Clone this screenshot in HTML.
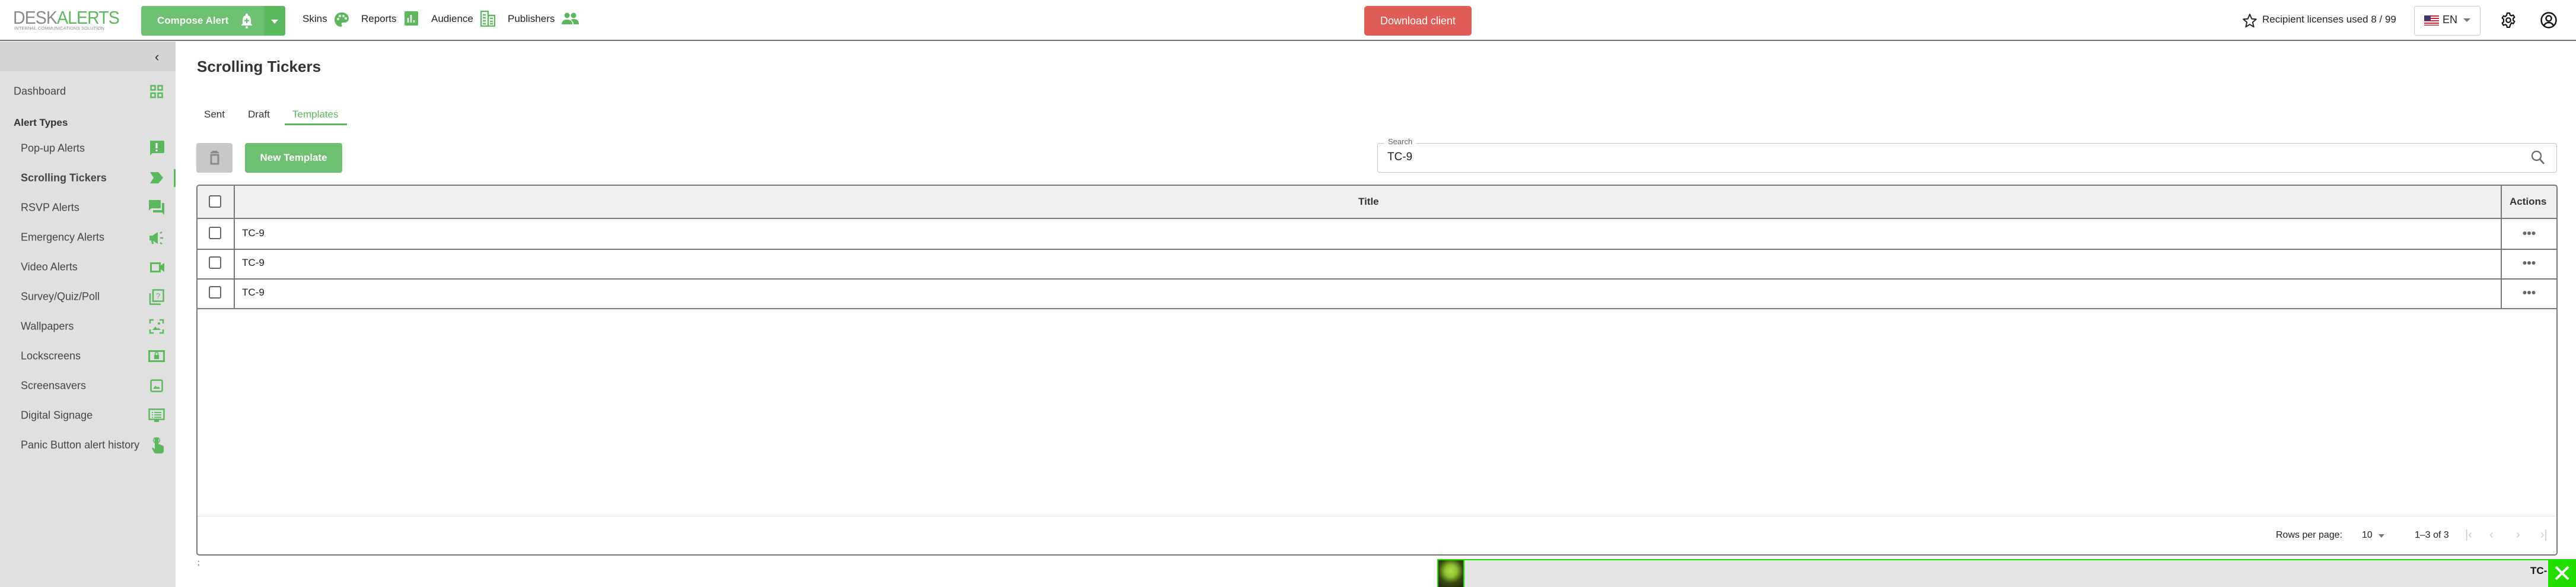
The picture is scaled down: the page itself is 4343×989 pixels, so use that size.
<!DOCTYPE html>
<html><head><meta charset="utf-8"><style>
*{box-sizing:border-box;margin:0;padding:0}
body{width:4343px;height:989px;position:relative;overflow:hidden;background:#fff;font-family:"Liberation Sans",sans-serif;color:#333}
.a{position:absolute}
.hdr{left:0;top:0;width:4343px;height:69px;border-bottom:2px solid #707070;background:#fff}
.nav{font-size:17px;color:#222;top:22px}
.side{left:0;top:70px;width:296px;height:919px;background:#e0e0e0}
.si{left:35px;font-size:18px;color:#444;transform:translateY(-50%)}
.cb{width:21px;height:21px;border:2.5px solid #666;border-radius:3px;background:#fff}
</style></head><body>
<div class="a hdr"></div>
<div class="a" style="left:22px;top:14px;font-size:31px;letter-spacing:-1px;line-height:31px;transform:scaleX(0.92);transform-origin:left"><span style="color:#8a8a8a">DESK</span><span style="color:#5cb85c">ALERTS</span></div>
<div class="a" style="left:24px;top:43px;font-size:7.5px;color:#8a8a8a;letter-spacing:0.1px">INTERNAL COMMUNICATIONS SOLUTION</div>
<div class="a" style="left:238px;top:10px;width:243px;height:50px;background:#6cc070;border-radius:4px;overflow:hidden">
<div class="a" style="left:207px;top:0;width:36px;height:50px;background:#5cb85c"></div>
<div class="a" style="left:27px;top:15px;color:#fff;font-weight:700;font-size:17px">Compose Alert</div>
<svg class="a" style="left:166px;top:12px" width="24" height="26" viewBox="0 0 24 26"><path d="M12 1a2 2 0 0 1 2 2v1c4 1 5 5 5 9v5l2 2v1H3v-1l2-2v-5c0-4 1-8 5-9V3a2 2 0 0 1 2-2z" fill="#fff"/><path d="M12 9v8M8 13h8" stroke="#6cc070" stroke-width="2.2"/><circle cx="12" cy="24" r="2" fill="#fff"/></svg>
<div class="a" style="left:219px;top:23px;border:6px solid transparent;border-top:7px solid #fff"></div>
</div>
<div class="a nav" style="left:510px">Skins</div>
<svg class="a" style="left:563px;top:20px" width="26" height="26" viewBox="0 0 26 26"><path d="M13 1C6 1 1 6 1 13s5 12 11 12c2 0 2-2 1-3-1-2 0-4 2-4h3c4 0 7-3 7-7 0-6-5-10-12-10z" fill="#5cb85c"/><circle cx="7" cy="12" r="2" fill="#fff"/><circle cx="10" cy="7" r="2" fill="#fff"/><circle cx="16" cy="7" r="2" fill="#fff"/><circle cx="20" cy="11" r="2" fill="#fff"/></svg>
<div class="a nav" style="left:609px">Reports</div>
<svg class="a" style="left:682px;top:19px" width="23" height="24"><rect width="23" height="24" rx="2" fill="#5cb85c"/><path d="M6 19V11M11 19V6M16 19v-4" stroke="#fff" stroke-width="2.5"/></svg>
<div class="a nav" style="left:727px">Audience</div>
<svg class="a" style="left:810px;top:18px" width="25" height="27" viewBox="0 0 25 27"><path d="M1 1h12v25H1zM13 8h11v18H13z" fill="none" stroke="#5cb85c" stroke-width="2.5"/><path d="M4 7h5M4 12h5M4 17h5M4 22h5M16 13h5M16 18h5M16 22h5" stroke="#5cb85c" stroke-width="2.5"/></svg>
<div class="a nav" style="left:856px">Publishers</div>
<svg class="a" style="left:947px;top:21px" width="29" height="20" viewBox="0 0 29 20"><circle cx="9" cy="5" r="4.5" fill="#5cb85c"/><circle cx="20" cy="5" r="4.5" fill="#5cb85c"/><path d="M0 20c0-6 4-8 9-8s9 2 9 8zM15 12c1 0 3-1 5-1 5 0 9 2 9 9h-9c0-4-2-6-5-8z" fill="#5cb85c"/></svg>
<div class="a" style="left:2300px;top:10px;width:181px;height:50px;background:#e05c57;border-radius:5px;color:#fff;font-size:18px;text-align:center;line-height:50px">Download client</div>
<svg class="a" style="left:3780px;top:22px" width="26" height="26" viewBox="0 0 24 24"><path d="M12 2l3 7 7 .6-5.5 4.7 1.7 7.2L12 17.6 5.8 21.5l1.7-7.2L2 9.6 9 9z" fill="none" stroke="#222" stroke-width="1.8" stroke-linejoin="round"/></svg>
<div class="a" style="left:3814px;top:23px;font-size:17px;color:#222">Recipient licenses used 8 / 99</div>
<div class="a" style="left:4070px;top:10px;width:112px;height:50px;border:1px solid #ccc;border-radius:4px"></div>
<svg class="a" style="left:4087px;top:26px" width="25" height="17"><rect width="25" height="17" fill="#fff"/><g fill="#c8283c"><rect y="0" width="25" height="2"/><rect y="4" width="25" height="2"/><rect y="8" width="25" height="2"/><rect y="12" width="25" height="2"/><rect y="15.5" width="25" height="1.5"/></g><rect width="11" height="9" fill="#3c3b6e"/></svg>
<div class="a" style="left:4118px;top:23px;font-size:18px;color:#222">EN</div>
<div class="a" style="left:4153px;top:31px;border:6px solid transparent;border-top:6px solid #777"></div>
<svg class="a" style="left:4216px;top:21px" width="26" height="26" viewBox="0 0 24 24"><path d="M10 1h4l.6 3 2.2 1.2 2.8-1.2 2 3.4-2.2 2v2.6l2.2 2-2 3.4-2.8-1.2L14.6 20 14 23h-4l-.6-3-2.2-1.2-2.8 1.2-2-3.4 2.2-2V10.6L2.4 8.6l2-3.4 2.8 1.2L9.4 4z" fill="none" stroke="#111" stroke-width="2" stroke-linejoin="round"/><circle cx="12" cy="12" r="3.5" fill="none" stroke="#111" stroke-width="2"/></svg>
<svg class="a" style="left:4283px;top:20px" width="28" height="28" viewBox="0 0 28 28"><circle cx="14" cy="14" r="12.5" fill="none" stroke="#111" stroke-width="2.4"/><circle cx="14" cy="11" r="4.5" fill="none" stroke="#111" stroke-width="2.4"/><path d="M6 23c2-4 5-5 8-5s6 1 8 5" fill="none" stroke="#111" stroke-width="2.4"/></svg>
<div class="a side"></div>
<div class="a" style="left:0;top:70px;width:296px;height:50px;background:#d4d4d4"></div>
<div class="a" style="left:261px;top:83px;font-size:22px;color:#222">‹</div>
<div class="a si" style="top:154px;left:23px">Dashboard</div>
<svg class="a" style="left:253px;top:143px" width="22" height="23"><g fill="none" stroke="#5cb85c" stroke-width="2.5"><rect x="1.5" y="1.5" width="7" height="7"/><rect x="13.5" y="1.5" width="7" height="7"/><rect x="1.5" y="14" width="7" height="7"/><rect x="13.5" y="14" width="7" height="7"/></g></svg>
<div class="a si" style="top:207px;left:23px;font-weight:700;color:#333;font-size:17px">Alert Types</div>
<div class="a si" style="top:250px">Pop-up Alerts</div>
<svg class="a" style="left:251px;top:237px" width="26" height="26"><path d="M2 0h22a2 2 0 0 1 2 2v17a2 2 0 0 1-2 2H6l-4 4z" fill="#5cb85c"/><path d="M13 4v9M13 15v3" stroke="#fff" stroke-width="3"/></svg>
<div class="a si" style="top:300px;font-weight:700">Scrolling Tickers</div>
<svg class="a" style="left:253px;top:290px" width="22" height="19"><path d="M0 0h14l8 9.5-8 9.5H0l6-9.5z" fill="#5cb85c"/></svg>
<div class="a" style="left:293px;top:285px;width:3px;height:30px;background:#5cb85c"></div>
<div class="a si" style="top:350px">RSVP Alerts</div>
<svg class="a" style="left:251px;top:337px" width="27" height="26"><path d="M0 0h20v14H4l-4 4z" fill="#5cb85c"/><path d="M22 5h4v20l-4-4H7v-4h15z" fill="#5cb85c"/></svg>
<div class="a si" style="top:400px">Emergency Alerts</div>
<svg class="a" style="left:251px;top:389px" width="26" height="24"><path d="M1 8h5l9-6v20l-9-6H1z" fill="#5cb85c"/><path d="M5 16l2 6" stroke="#5cb85c" stroke-width="3"/><path d="M19 4l3-2M19 12h5M19 20l3 2" stroke="#5cb85c" stroke-width="2.5"/></svg>
<div class="a si" style="top:450px">Video Alerts</div>
<svg class="a" style="left:253px;top:442px" width="24" height="17"><rect x="1.5" y="1.5" width="15" height="14" fill="none" stroke="#5cb85c" stroke-width="3"/><path d="M17 6l7-5v15l-7-5z" fill="#5cb85c"/></svg>
<div class="a si" style="top:500px">Survey/Quiz/Poll</div>
<svg class="a" style="left:251px;top:487px" width="26" height="27"><path d="M7 1.5h17.5v19H7zM2 7v18.5h18" fill="none" stroke="#5cb85c" stroke-width="2.5"/><text x="12" y="16" font-size="13" fill="#5cb85c" font-family="Liberation Sans">?</text></svg>
<div class="a si" style="top:550px">Wallpapers</div>
<svg class="a" style="left:251px;top:537px" width="26" height="26"><path d="M2 8V2h6M18 2h6v6M24 18v6h-6M8 24H2v-6" fill="none" stroke="#5cb85c" stroke-width="2.5"/><path d="M6 19l5-6 3 4 2-2 4 4z" fill="#5cb85c"/><circle cx="17" cy="8" r="2" fill="#5cb85c"/></svg>
<div class="a si" style="top:600px">Lockscreens</div>
<svg class="a" style="left:250px;top:590px" width="28" height="20"><rect width="28" height="20" fill="#5cb85c"/><rect x="3" y="3" width="22" height="14" fill="#e0e0e0"/><rect x="10" y="8" width="8" height="7" fill="#5cb85c"/><path d="M11.5 8V6a2.5 2.5 0 0 1 5 0v2" fill="none" stroke="#5cb85c" stroke-width="1.5"/></svg>
<div class="a si" style="top:650px">Screensavers</div>
<svg class="a" style="left:253px;top:639px" width="22" height="22"><rect x="1.5" y="1.5" width="19" height="19" rx="2" fill="none" stroke="#5cb85c" stroke-width="2.5"/><path d="M5 16l4-5 3 3 2-2 3 4z" fill="#5cb85c"/></svg>
<div class="a si" style="top:700px">Digital Signage</div>
<svg class="a" style="left:250px;top:688px" width="28" height="23"><rect x="1.5" y="1.5" width="25" height="17" fill="none" stroke="#5cb85c" stroke-width="2.5"/><path d="M6 7h2M10 7h12M6 11h2M10 11h12M6 15h2M10 15h12" stroke="#5cb85c" stroke-width="1.8"/><rect x="10" y="19" width="8" height="4" fill="#5cb85c"/></svg>
<div class="a si" style="top:750px">Panic Button alert history</div>
<svg class="a" style="left:254px;top:737px" width="22" height="27"><path d="M7 3a3 3 0 0 1 6 0v8l6 2c2 1 3 2 3 4v6c0 2-2 4-4 4H9c-2 0-3-1-4-3l-3-6 2-1 3 3z" fill="#5cb85c"/><circle cx="10" cy="5" r="5" fill="none" stroke="#5cb85c" stroke-width="1.5"/></svg>
<div class="a" style="left:332px;top:97px;font-size:26px;font-weight:700;color:#333">Scrolling Tickers</div>
<div class="a" style="left:344px;top:183px;font-size:17px;color:#333">Sent</div>
<div class="a" style="left:418px;top:183px;font-size:17px;color:#333">Draft</div>
<div class="a" style="left:493px;top:183px;font-size:17px;color:#5cb85c">Templates</div>
<div class="a" style="left:480px;top:208px;width:105px;height:3px;background:#5cb85c"></div>
<div class="a" style="left:331px;top:241px;width:61px;height:50px;background:#c8c8c8;border-radius:4px"></div>
<svg class="a" style="left:353px;top:254px" width="18" height="24"><path d="M2 3h14M6 3V1h6v2" stroke="#8a8a8a" stroke-width="2.5" fill="none"/><rect x="3" y="7" width="12" height="15" fill="none" stroke="#8a8a8a" stroke-width="3"/></svg>
<div class="a" style="left:413px;top:241px;width:164px;height:50px;background:#6cc070;border-radius:4px;color:#fff;font-weight:700;font-size:17px;text-align:center;line-height:50px">New Template</div>
<div class="a" style="left:2322px;top:241px;width:1989px;height:50px;border:1.5px solid #c4c4c4;border-radius:4px"></div>
<div class="a" style="left:2334px;top:231px;padding:0 6px;background:#fff;font-size:13px;color:#666">Search</div>
<div class="a" style="left:2339px;top:254px;font-size:19px;color:#222">TC-9</div>
<svg class="a" style="left:4267px;top:253px" width="24" height="25"><circle cx="9.5" cy="9.5" r="7.5" fill="none" stroke="#666" stroke-width="2.2"/><path d="M15 15l7 8" stroke="#666" stroke-width="2.5"/></svg>
<div class="a" style="left:331px;top:311px;width:3981px;height:625px;border:2px solid #777;border-radius:5px;overflow:hidden">
<div class="a" style="left:0;top:0;width:3979px;height:56px;background:#f0f0f0;border-bottom:2px solid #777"></div>
<div class="a" style="left:0;top:56px;width:3979px;height:52px;border-bottom:2px solid #777"></div>
<div class="a" style="left:0;top:106px;width:3979px;height:52px;border-bottom:2px solid #777"></div>
<div class="a" style="left:0;top:156px;width:3979px;height:52px;border-bottom:2px solid #777"></div>
<div class="a" style="left:61px;top:0;width:2px;height:206px;background:#777"></div>
<div class="a" style="left:3883px;top:0;width:2px;height:206px;background:#777"></div>
<div class="a" style="left:0;top:556px;width:3979px;height:1px;background:#ddd"></div>
</div>
<div class="a cb" style="left:352px;top:329px"></div>
<div class="a cb" style="left:352px;top:382px"></div>
<div class="a cb" style="left:352px;top:432px"></div>
<div class="a cb" style="left:352px;top:482px"></div>
<div class="a" style="left:2290px;top:330px;font-size:17px;font-weight:700;color:#333">Title</div>
<div class="a" style="left:4231px;top:330px;font-size:17px;font-weight:700;color:#333">Actions</div>
<div class="a" style="left:408px;top:383px;font-size:17px;color:#222">TC-9</div>
<div class="a" style="left:408px;top:433px;font-size:17px;color:#222">TC-9</div>
<div class="a" style="left:408px;top:483px;font-size:17px;color:#222">TC-9</div>
<svg class="a" style="left:4253px;top:389px" width="22" height="8"><g fill="#666"><circle cx="3.5" cy="4" r="3"/><circle cx="11" cy="4" r="3"/><circle cx="18.5" cy="4" r="3"/></g></svg>
<svg class="a" style="left:4253px;top:439px" width="22" height="8"><g fill="#666"><circle cx="3.5" cy="4" r="3"/><circle cx="11" cy="4" r="3"/><circle cx="18.5" cy="4" r="3"/></g></svg>
<svg class="a" style="left:4253px;top:489px" width="22" height="8"><g fill="#666"><circle cx="3.5" cy="4" r="3"/><circle cx="11" cy="4" r="3"/><circle cx="18.5" cy="4" r="3"/></g></svg>
<div class="a" style="left:3837px;top:893px;font-size:16px;color:#222">Rows per page:</div>
<div class="a" style="left:3982px;top:893px;font-size:16px;color:#222">10</div>
<div class="a" style="left:4010px;top:900px;border:5px solid transparent;border-top:6px solid #777"></div>
<div class="a" style="left:4071px;top:893px;font-size:16px;color:#222">1–3 of 3</div>
<div class="a" style="left:4156px;top:890px;font-size:20px;color:#ccc">|‹</div>
<div class="a" style="left:4197px;top:890px;font-size:20px;color:#ccc">‹</div>
<div class="a" style="left:4242px;top:890px;font-size:20px;color:#ccc">›</div>
<div class="a" style="left:4283px;top:890px;font-size:20px;color:#ccc">›|</div>
<div class="a" style="left:333px;top:940px;font-size:13px;color:#333">;</div>
<div class="a" style="left:2423px;top:942px;width:1920px;height:47px;background:#e5e5e5;border-top:2px solid #22dd00;border-left:2px solid #22dd00"></div>
<div class="a" style="left:2425px;top:944px;width:44px;height:45px;background:radial-gradient(circle at 50% 40%,#b5e04a 0,#8cc030 30%,#3a4a10 60%,#1c2408 100%);border-right:2px solid #22dd00"></div>
<div class="a" style="left:4266px;top:952px;font-size:17px;font-weight:700;color:#111">TC-</div>
<div class="a" style="left:4296px;top:942px;width:47px;height:47px;background:#22dd00"></div>
<svg class="a" style="left:4306px;top:952px" width="27" height="27"><path d="M3 3l21 21M24 3L3 24" stroke="#fff" stroke-width="4"/></svg>
</body></html>
